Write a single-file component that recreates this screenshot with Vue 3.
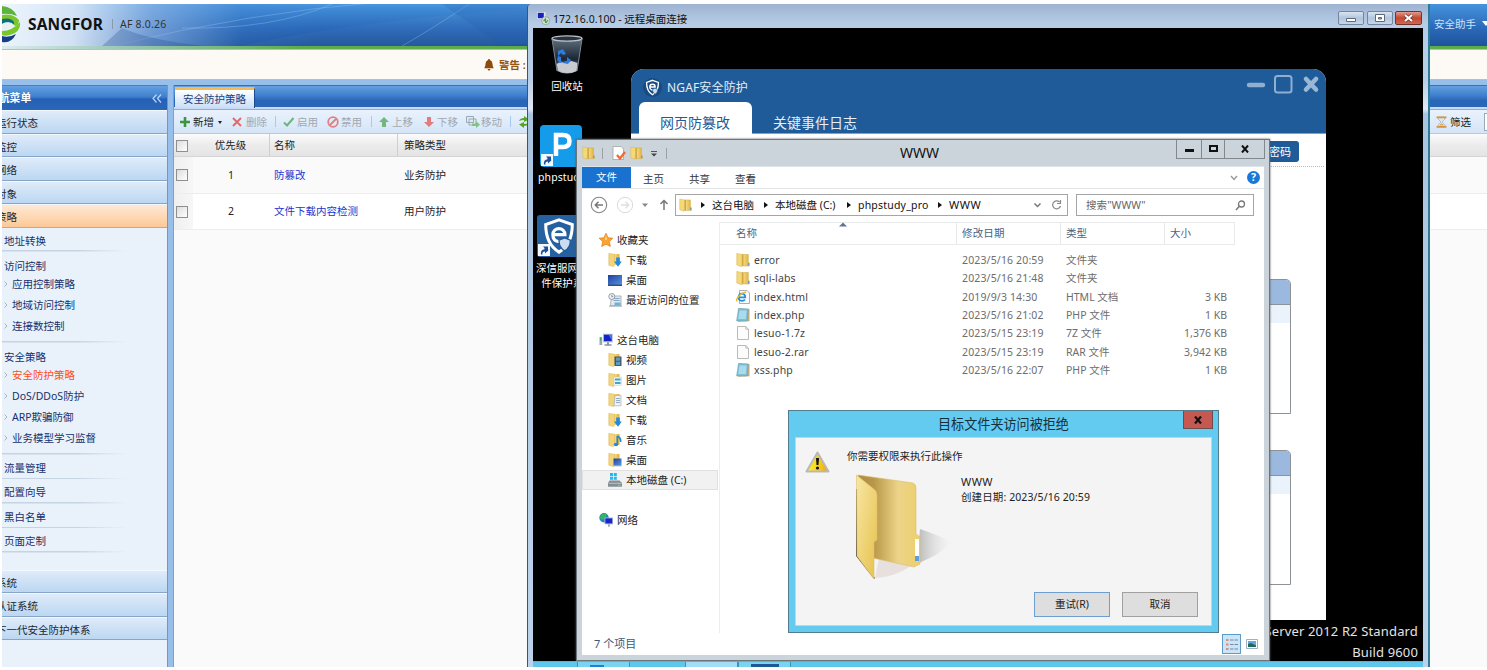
<script setup>
const topMenus = ['运行状态', '监控', '网络', '对象', '策略']
const bottomMenus = ['系统', '认证系统', '下一代安全防护体系']
const tree = [
  { cls: 't1', label: '地址转换', kids: [] },
  { cls: 't2', label: '访问控制', kids: ['应用控制策略', '地域访问控制', '连接数控制'] },
  { cls: 't3', label: '安全策略', kids: ['安全防护策略', 'DoS/DDoS防护', 'ARP欺骗防御', '业务模型学习监督'] },
  { cls: 't4', label: '流量管理', kids: [] },
  { cls: 't4', label: '配置向导', kids: [] },
  { cls: 't4', label: '黑白名单', kids: [] },
  { cls: 't4', label: '页面定制', kids: [] },
]
const rows = [
  { n: 1, name: '防篡改', type: '业务防护' },
  { n: 2, name: '文件下载内容检测', type: '用户防护' },
]
const favs = [['下载', 'f-down'], ['桌面', 'desk'], ['最近访问的位置', 'recent']]
const pcs = [
  ['视频', 'f-video'], ['图片', 'f-pic'], ['文档', 'f-doc'], ['下载', 'f-down'],
  ['音乐', 'f-music'], ['桌面', 'f-desk'], ['本地磁盘 (C:)', 'drive'],
]
const files = [
  ['error', '2023/5/16 20:59', '文件夹', '', 'folder'],
  ['sqli-labs', '2023/5/16 21:48', '文件夹', '', 'folder'],
  ['index.html', '2019/9/3 14:30', 'HTML 文档', '3 KB', 'ie'],
  ['index.php', '2023/5/16 21:02', 'PHP 文件', '1 KB', 'note'],
  ['lesuo-1.7z', '2023/5/15 23:19', '7Z 文件', '1,376 KB', 'blank'],
  ['lesuo-2.rar', '2023/5/15 23:19', 'RAR 文件', '3,942 KB', 'blank'],
  ['xss.php', '2023/5/16 22:07', 'PHP 文件', '1 KB', 'note'],
]
</script>

<template>
  <div class="page">
    <svg class="defs" width="0" height="0">
      <defs>
        <linearGradient id="gFold" x1="0" x2="1"><stop offset="0" stop-color="#f9e48c" /><stop offset="1" stop-color="#dcae3c" /></linearGradient>
        <linearGradient id="gBig" x1="0" x2="1" y1="0" y2="1"><stop offset="0" stop-color="#f8e6a4" /><stop offset="1" stop-color="#e6c14c" /></linearGradient>
        <linearGradient id="gBack" x1="0" x2="1"><stop offset="0" stop-color="#b08d40" /><stop offset=".25" stop-color="#b99748" /><stop offset=".65" stop-color="#ecd488" /><stop offset="1" stop-color="#edcf6c" /></linearGradient>
        <linearGradient id="gShade" x1="0" x2="1"><stop offset="0" stop-color="#999" stop-opacity=".9" /><stop offset="1" stop-color="#ddd" stop-opacity="0" /></linearGradient>
        <linearGradient id="gWarn" x1="0" x2="1"><stop offset="0" stop-color="#ffee35" /><stop offset=".5" stop-color="#f7d51c" /><stop offset="1" stop-color="#f0a010" /></linearGradient>
        <linearGradient id="gBin" x1="0" x2="0" y1="0" y2="1"><stop offset="0" stop-color="#6d7c8c" /><stop offset=".6" stop-color="#1d2a3a" /><stop offset="1" stop-color="#b4bac0" /></linearGradient>
        <linearGradient id="gDesk" x1="0" x2="1" y1="0" y2="1"><stop offset="0" stop-color="#1d3f9c" /><stop offset="1" stop-color="#5a94e0" /></linearGradient>
      </defs>
      <symbol id="folder" viewBox="0 0 14 14">
        <path d="M6 1.500h6.300v7.500l1 1v3H6z" fill="url(#gFold)" stroke="#d0a342" stroke-width=".5" />
        <path d="M.8.500 6 1.500v5.500l-.6 6.800L.8 12z" fill="#f4d976" stroke="#d9b04c" stroke-width=".5" />
        <path d="M6.200 1.800v11h1.200v-11z" fill="#c2922f" opacity=".8" />
        <path d="M12 10h1.200v2.500H12z" fill="#5d9ede" />
      </symbol>
      <symbol id="fbase" viewBox="0 0 14 14">
        <path d="M6 1h5.500V12H6z" fill="url(#gFold)" />
        <path d="M.8 .4 6.500 1.200v10.300L5.500 13.600.8 12.300z" fill="#f2d57a" stroke="#dbb354" stroke-width=".5" />
      </symbol>
      <symbol id="f-down" viewBox="0 0 14 14"><use href="#fbase" /><path d="M8.200 4.500h3.600v4h2L10 13.700 6 8.500h2.200z" fill="#2389dc" /></symbol>
      <symbol id="f-video" viewBox="0 0 14 14"><use href="#fbase" /><path d="M6.500 3.500h7V13h-7z" fill="#4a5560" /><path d="M8 4.500h4.200v3.300H8zM8 8.800h4.200v3.200H8z" fill="#5b9bc4" /></symbol>
      <symbol id="f-pic" viewBox="0 0 14 14"><use href="#fbase" /><path d="M6 4h7.600v8.500H6z" fill="#eaf4fa" stroke="#b4c4ce" stroke-width=".4" /><path d="M7 5.500h5.600v2H7zM7 9h5.600v2H7z" fill="#4aa2c9" /></symbol>
      <symbol id="f-doc" viewBox="0 0 14 14"><use href="#fbase" /><path d="M7 2.500h6v10.300H6z" fill="#eef1f5" stroke="#9aa5b1" stroke-width=".6" /><path d="M8 5.500h4M8 7.500h4M8 9.500h4" stroke="#7b9cc0" stroke-width=".8" /></symbol>
      <symbol id="f-music" viewBox="0 0 14 14"><use href="#fbase" /><path d="M9.300 3v8M9.300 3q4 2 3.200 6" stroke="#2788d6" stroke-width="1.700" fill="none" /><ellipse cx="8" cy="11.500" rx="2.200" ry="1.800" fill="#2788d6" /></symbol>
      <symbol id="f-desk" viewBox="0 0 14 14"><use href="#fbase" /><path d="M5.500 5.500h8V12h-8z" fill="url(#gDesk)" /><path d="M5.500 12h8v1.300h-8z" fill="#8ea3b8" /></symbol>
      <symbol id="desk" viewBox="0 0 14 14"><path d="M0 2h14v10H0z" fill="url(#gDesk)" /><path d="M0 11.500h14v1.500H0z" fill="#30507e" /></symbol>
      <symbol id="recent" viewBox="0 0 14 14"><path d="M3.500 3h9.500v9.500H2.500z" fill="#e4e9ec" stroke="#8f9aa2" stroke-width=".7" /><path d="M5.500 5.500h6M5.500 7.500h6" stroke="#7ba6c6" /><circle cx="3.800" cy="3.500" r="3" fill="#eef2f4" stroke="#8a949b" stroke-width=".9" /><path d="M3.800 2v1.700h1.400" fill="none" stroke="#666" stroke-width=".7" /><path d="M6.500 9.500h6v3h-6z" fill="#6fb0d4" /><path d="M1 12.500h13v1.200H1z" fill="#a7afb5" /></symbol>
      <symbol id="drive" viewBox="0 0 14 14"><path d="M2 0h3v3H2zM5.800 0h3v3h-3zM2 3.800h3v3H2zM5.800 3.800h3v3h-3z" fill="#20b9f0" /><path d="M1.500 7.500h10L14 10v3.700H0V10z" fill="#858e96" /><path d="M.5 9.800h13v.9H.5z" fill="#c3c9cd" /><path d="M10 11.700h2.500v1H10z" fill="#6ee080" /></symbol>
      <symbol id="star" viewBox="0 0 14 14"><path d="m7 .2 2.100 4.500 4.800.500-3.500 3.300.900 5L7 11.200l-4.300 2.300.900-5L.1 5.200 4.900 4.700z" fill="#fba233" stroke="#e0801c" stroke-width=".7" /><path d="m7 2.500 1 4.300H6z" fill="#ffe29a" /></symbol>
      <symbol id="pc" viewBox="0 0 14 14"><path d="M4 .800h9.700v8.500H4z" fill="#a9b8d4" /><path d="M5 1.800h7.700v6.300H5z" fill="#1422c8" /><path d="M9.500 1.800h3.200v5.500z" fill="#4a7ae8" /><path d="M.5 4h2.700v8H.5z" fill="#9ca5ad" /><path d="M1 5h1.200v2.500H1z" fill="#35b44a" /><path d="M8 9.200h2v2h2.500v1.600H5.500v-1.600H8z" fill="#8893a0" /></symbol>
      <symbol id="net" viewBox="0 0 14 14"><circle cx="5" cy="4.800" r="4.700" fill="#2182c8" /><path d="M2 2Q5-.5 8 1.500L6 5 3 7 .8 5z" fill="#35b55e" /><path d="M5.500 4.500H14v6.800H5.500z" fill="#a9b8d4" /><path d="M6.400 5.400h6.800v5H6.400z" fill="#1624c8" /><path d="M9.300 11.300h1.300v2.500H9.300z" fill="#7c8790" /></symbol>
      <symbol id="ie" viewBox="0 0 14 14"><path d="M3.500.5H11l2.500 2.500v10.500h-10z" fill="#fafafa" stroke="#999" stroke-width=".8" /><path d="M2.800 7.300h6.400q0-3.600-3.300-3.600T2.600 7.300 6 10.800q2 0 2.900-1.400" fill="none" stroke="#2390da" stroke-width="1.800" /><path d="M1 11.500C-.5 9 4 3 10.200 2" fill="none" stroke="#edb82d" stroke-width="1.400" /></symbol>
      <symbol id="note" viewBox="0 0 14 14"><path d="m2.500.5 11 .5v12.300L2 13.800z" fill="#c2ac80" /><path d="m2.500.5 9.700.4-1 12H.6z" fill="#7fbfd6" stroke="#5f9ab0" stroke-width=".5" /><path d="m3.500 2.500 7.200.1-.8 8.400H2.300z" fill="#a8dbec" /></symbol>
      <symbol id="blank" viewBox="0 0 14 14"><path d="M1.500.5h8.300l2.700 2.700v10.300h-11z" fill="#fcfcfc" stroke="#a8a8a8" stroke-width=".8" /><path d="M9.800.5v2.700h2.700" fill="none" stroke="#a8a8a8" stroke-width=".7" /></symbol>
      <symbol id="shield" viewBox="0 0 20 20"><path d="M10 1.500 17 4c0 7-2 11.500-7 14.500C5 15.500 3 11 3 4z" fill="none" stroke="#fff" stroke-width="1.600" /><path d="M6.800 9.300h6.300c0-4.300-6.300-4.300-6.300 0 0 4 4 4.500 6 2.500" fill="none" stroke="#fff" stroke-width="1.700" /><path d="m13 11 3 1.200c0 3-1 4.500-3 5.600-2-1.100-3-2.600-3-5.600z" fill="#c9dcf0" stroke="#1f5b99" stroke-width=".7" /></symbol>
      <symbol id="link" viewBox="0 0 12 12"><path d="M0 0h12v12H0z" fill="#f4f7fb" /><path d="M3 10.500C2.500 7 4 5.500 6.500 5.200V3L10.500 6 7 9.500V7.500C5 7.500 4 8.500 4.500 10.500z" fill="#1e4f9a" /><path d="M5 2.500h5v5z" fill="#1e4f9a" /></symbol>
    </svg>

    <div class="stage">
      <header class="top">
        <svg class="waves" width="1485" height="42" viewBox="0 0 1485 42">
          <path d="M90 0H525V42H240Q330 20 525 4" fill="#fff" opacity=".03" />
          <path d="M110 42Q250 8 380-2M180 24Q270 26 330 0M400 42Q430 25 470-2" fill="none" stroke="#9cc8f2" stroke-width=".8" opacity=".45" />
          <path d="M120 24Q200 60 525 40V42H100z" fill="#123f86" opacity=".25" />
          <path d="M440 0H525V42H500z" fill="#1c5aab" opacity=".2" />
        </svg>
        <svg class="logo" width="22" height="42" viewBox="0 0 22 42">
          <path d="M0 1Q11 2 15 11 8 8 0 9z" fill="#5ab53a" />
          <path d="M0 10Q10 8 17 15 17 20 13 21 8 14 0 17z" fill="#7cc62c" />
          <path d="M0 14Q9 12 12 17L12 20Q5 15 0 19z" fill="#0d6f80" />
          <path d="M0 26Q10 26 18 17 19 24 13 28 5 32 0 30z" fill="#79c72b" />
          <path d="M0 19Q9 15 12 20 9 24 0 25z" fill="#e6f1f4" />
          <path d="M0 31Q7 33 14 29 9 39 0 37z" fill="#173d86" />
        </svg>
        <b class="brand">SANGFOR</b><i class="bar"></i><span class="ver">AF 8.0.26</span>
        <span class="assist">安全助手</span><i class="tri"></i>
      </header>
      <div class="alert">
        <svg width="10" height="12" viewBox="0 0 10 12"><path d="M5 0q1 0 1 1 2.500.800 2.500 4 0 2.800 1.200 4.200H.3Q1.500 7.800 1.500 5 1.500 1.800 4 1q0-1 1-1zM3.600 10h2.800Q6.200 11.600 5 11.600T3.600 10z" fill="#8d4a08" /></svg>
        <b>警告 :</b>
      </div>

      <div class="main">
        <nav class="side">
          <div class="side-title"><b>导航菜单</b><svg width="10" height="9" viewBox="0 0 10 9"><path d="M4.500.5 1 4.500l3.500 4M9 .5 5.500 4.500 9 8.500" fill="none" stroke="#b7d6fa" stroke-width="1.200" /></svg></div>
          <div v-for="(m, i) in topMenus" :key="m" class="acc" :class="{ hot: i === 4 }">{{ m }}</div>
          <div class="tree">
            <div v-for="g in tree" :key="g.label" class="grp" :class="g.cls">
              <div class="gname">{{ g.label }}</div>
              <div v-for="k in g.kids" :key="k" class="kid" :class="{ red: k === '安全防护策略' }">
                <svg width="4" height="6" viewBox="0 0 4 6"><path d="m.5.500 2.500 2.500-2.500 2.500" fill="none" stroke="#a3b4c6" /></svg>{{ k }}
              </div>
            </div>
          </div>
          <div v-for="m in bottomMenus" :key="m" class="acc">{{ m }}</div>
        </nav>
        <section class="content">
          <div class="tabs"><div class="tab">安全防护策略</div></div>
          <div class="tools">
            <svg class="ic i1" width="10" height="10"><path d="M5 0v10M0 5h10" stroke="#3f9440" stroke-width="2.600" /></svg><span class="on">新增</span><i class="dd"></i>
            <svg class="ic i2" width="10" height="10"><path d="m1 1 8 8M9 1 1 9" stroke="#e2696b" stroke-width="1.900" /></svg><span>删除</span><i class="sep s1"></i>
            <svg class="ic i3" width="12" height="10"><path d="m1 5.500 3 3L10.500 1" fill="none" stroke="#71b380" stroke-width="2" /></svg><span>启用</span>
            <svg class="ic i4" width="12" height="12"><circle cx="6" cy="6" r="4.800" fill="none" stroke="#e08080" stroke-width="1.800" /><path d="m9.500 2.500-7 7" stroke="#e08080" stroke-width="1.800" /></svg><span>禁用</span><i class="sep s2"></i>
            <svg class="ic i5" width="10" height="10"><path d="m5 0 5 5H7v5H3V5H0z" fill="#73b77c" /></svg><span>上移</span>
            <svg class="ic i6" width="10" height="10"><path d="m5 10 5-5H7V0H3v5H0z" fill="#e27b7b" /></svg><span>下移</span>
            <svg class="ic i7" width="14" height="12"><path d="M.5.500h7v6h-7zM3 3h7v6H3z" fill="#e3ebf2" stroke="#98a9b8" /><path d="M6 7.500h4V5l4 3.800-4 3.200v-2H6z" fill="#82c282" /></svg><span>移动</span><i class="sep s3"></i>
            <svg class="ic i8" width="12" height="12"><path d="M1 5q1-3 5-3V0l5 3.500L6 6V4Q3 4 1 5zM11 7q-1 3-5 3v2L1 8.500 6 6v2q3 0 5-1z" fill="#56a525" /></svg>
            <svg class="ic i9" width="11" height="12" viewBox="0 0 11 12"><path d="M2 1h7v2L6 6l3 3v2H2V9l3-3-3-3z" fill="#dbe6ee" stroke="#9eb0bd" stroke-width=".7" /><path d="M.5.500h10v1.800H.5zM.5 10h10v1.800H.5z" fill="#dc9340" /><path d="M3 9.500 5.500 7.200l2.500 2.300z" fill="#e2a24d" /></svg><span class="flt">筛选</span><i class="inp"></i>
          </div>
          <div class="gh"><i class="cb"></i><span class="c1">优先级</span><span class="c2">名称</span><span class="c3">策略类型</span></div>
          <div v-for="r in rows" :key="r.n" class="gr"><div class="cbw"><i class="cb"></i></div><span class="c1">{{ r.n }}</span><span class="c2 lk">{{ r.name }}</span><span class="c3">{{ r.type }}</span></div>
        </section>
      </div>

      <div class="rdp">
        <div class="rdp-title">
          <svg width="13" height="13" viewBox="0 0 13 13"><path d="M0 0h8.500v7H0z" fill="#dfe6f0" /><path d="M.8.800h6v5.400h-6z" fill="#1822b8" /><circle cx="8.700" cy="8.700" r="4" fill="#d9e2da" stroke="#7d8c85" stroke-width=".6" /><path d="m6.500 9 2-2v4M11 8l-2 3" stroke="#43a047" stroke-width="1.200" fill="none" /></svg>
          <span>172.16.0.100 - 远程桌面连接</span>
          <i class="wb"><svg width="26" height="14"><path d="M8.500 7.500h9v3h-9z" fill="#fff" stroke="#5c6a7c" /></svg></i>
          <i class="wb"><svg width="26" height="14"><path d="M8.500 3.500h9v7h-9z" fill="#fff" stroke="#5c6a7c" /><path d="M11.500 6.500h3v1.500h-3z" fill="#9fb0c4" stroke="#5c6a7c" /></svg></i>
          <i class="wb cl"><svg width="27" height="14"><path d="m10 4 7 6M17 4l-7 6" stroke="#6c3a38" stroke-width="3.600" /><path d="m10 4 7 6M17 4l-7 6" stroke="#fff" stroke-width="2" /></svg></i>
        </div>
        <div class="desktop">
          <div class="dicon d1">
            <svg width="34" height="40" viewBox="0 0 34 40"><path d="M2 3h30l-5 33q-10 5-20 0z" fill="url(#gBin)" opacity=".9" /><ellipse cx="17" cy="3.500" rx="15" ry="2.600" fill="#28323e" stroke="#b8c0c8" stroke-width="1.400" /><path d="m6.500 29 4-2 5 1 6-2 6 2-1 8q-9 4-18 0z" fill="#c8ccd0" /><path d="m2 4 5 32M32 4l-5 32" stroke="#7f8a95" /><path d="m8 16 5-2 3 5-3 1-2-2-3 3zM17 22l4 3-3 4-5-1 2-2 2 0zM8 21l3 1 0 4 2 1-3 1-3-3z" fill="#2e7be0" /></svg>
            <span>回收站</span>
          </div>
          <div class="dicon d2">
            <svg width="42" height="42" viewBox="0 0 42 42"><rect width="42" height="42" rx="4" fill="#149bea" /><path d="M16 31V10h7q6.500 0 6.500 6t-6.500 6h-6" fill="none" stroke="#fff" stroke-width="4.500" /><use href="#link" x="1" y="29" width="12" height="12" /></svg>
            <span>phpstudy</span>
          </div>
          <div class="dicon d3">
            <svg width="42" height="42" viewBox="0 0 42 42"><rect width="42" height="42" rx="3" fill="#2560a0" /><use href="#shield" x="2" y="2" width="40" height="38" /><use href="#link" x="1" y="29" width="12" height="12" /></svg>
            <span>深信服网页文<br>件保护系统</span>
          </div>
          <div class="mark">Server 2012 R2 Standard<br><span>Build 9600</span></div>

          <div class="ngaf">
            <div class="nh">
              <div class="nt"><i class="badge"><svg width="17" height="17"><use href="#shield" /></svg></i><span>NGAF安全防护</span>
                <svg class="nbtn" width="74" height="20" viewBox="0 0 74 20"><path d="M3 11h14" stroke="#8fafd0" stroke-width="4.400" stroke-linecap="round" /><rect x="29" y="2" width="16.500" height="16.500" rx="2.500" fill="none" stroke="#8fafd0" stroke-width="2" /><path d="m60 5 10 10.500M70 5 60 15.500" stroke="#9ab7d5" stroke-width="4.600" stroke-linecap="round" /></svg>
              </div>
              <div class="ntabs"><div class="ntab act">网页防篡改</div><div class="ntab">关键事件日志</div></div>
            </div>
            <div class="nb">
              <div class="pwr"><span class="pw">修改密码</span></div>
              <div class="panel p1"><div class="ph"></div><div class="pr"></div></div>
              <div class="panel p2"><div class="ph"></div><div class="pr"></div></div>
            </div>
          </div>

          <div class="exp">
            <div class="et">
              <div class="qa"><svg class="q1" width="13" height="14"><use href="#folder" /></svg><i></i><svg class="q2" width="14" height="14" viewBox="0 0 14 14"><path d="M1 .500h8l2.500 2.500v10.500H1z" fill="#fff" stroke="#999" stroke-width=".7" /><path d="m5 9 3 3.500L13 6" fill="none" stroke="#ec6a34" stroke-width="2.300" /></svg><svg class="q3" width="13" height="14"><use href="#folder" /></svg><svg class="q4" width="6" height="6"><path d="M0 .500h6" stroke="#555" /><path d="M0 2.500h6L3 5.500z" fill="#444" /></svg><i></i></div>
              <span class="etitle">WWW</span>
              <div class="eb"><i class="b1"><svg width="9" height="4"><path d="M0 1.500h9" stroke="#111" stroke-width="3" /></svg></i><i class="b2"><svg width="9" height="8"><rect x="1" y="1" width="7" height="5" fill="none" stroke="#111" stroke-width="2" /></svg></i><i class="b3"><svg width="8" height="8"><path d="m1 .500 6 7M7 .500l-6 7" stroke="#111" stroke-width="2" /></svg></i></div>
            </div>
            <div class="ebody">
              <div class="menu"><span class="m0">文件</span><span>主页</span><span>共享</span><span>查看</span>
                <svg class="chev" width="8" height="6"><path d="m1 1 3 3.500L7 1" fill="none" stroke="#999" stroke-width="1.400" /></svg>
                <i class="help">?</i></div>
              <div class="addr">
                <svg width="92" height="22" viewBox="0 0 92 22"><circle cx="17" cy="11" r="7.700" fill="none" stroke="#858585" stroke-width="1.100" /><path d="M21 11h-7.500M16.500 7.800 13.300 11l3.200 3.200" fill="none" stroke="#777" stroke-width="1.500" /><circle cx="43" cy="11" r="7.700" fill="none" stroke="#d9d9d9" /><path d="M39 11h7.500M43.500 7.800 46.700 11l-3.200 3.200" fill="none" stroke="#dedede" stroke-width="1.300" /><path d="M60 9.500h6l-3 3.500z" fill="#888" /><path d="M82 16V7M78.500 10 82 6.500l3.500 3.500" fill="none" stroke="#777" stroke-width="1.500" /></svg>
                <div class="abox"><svg width="13" height="14"><use href="#folder" /></svg><i class="ar"></i><span class="a1">这台电脑</span><i class="ar"></i><span class="a2">本地磁盘 (C:)</span><i class="ar"></i><span class="a3">phpstudy_pro</span><i class="ar"></i><span class="a4">WWW</span>
                  <svg class="acts" width="30" height="12"><path d="m1.500 4.500 3 3 3-3" fill="none" stroke="#777" stroke-width="1.500" /><path d="M26.500 3A4 4 0 1 0 27.500 7M27.500 1v3.500H24" fill="none" stroke="#888" stroke-width="1.200" /></svg></div>
                <div class="sbox"><span>搜索"WWW"</span><svg width="11" height="11"><circle cx="6.500" cy="4" r="3" fill="none" stroke="#777" stroke-width="1.300" /><path d="M4.500 6 1 10" stroke="#777" stroke-width="1.500" /></svg></div>
              </div>
              <div class="panes">
                <div class="np">
                  <div class="n0"><svg width="14" height="14"><use href="#star" /></svg>收藏夹</div>
                  <div v-for="f in favs" :key="f[0]" class="n1"><svg width="14" height="14"><use :href="'#' + f[1]" /></svg>{{ f[0] }}</div>
                  <div class="gap"></div>
                  <div class="n0"><svg width="14" height="14"><use href="#pc" /></svg>这台电脑</div>
                  <div v-for="f in pcs" :key="f[0]" class="n1" :class="{ sel: f[1] === 'drive' }"><svg width="14" height="14"><use :href="'#' + f[1]" /></svg>{{ f[0] }}</div>
                  <div class="gap"></div>
                  <div class="n0"><svg width="14" height="14"><use href="#net" /></svg>网络</div>
                </div>
                <div class="fl">
                  <div class="fh"><span class="k1">名称<svg width="8" height="5"><path d="M0 4.500h8L4 .500z" fill="#5d7594" /></svg></span><span class="k2">修改日期</span><span class="k3">类型</span><span class="k4">大小</span></div>
                  <div v-for="f in files" :key="f[0]" class="fr"><span class="k1"><svg width="14" height="14"><use :href="'#' + f[4]" /></svg>{{ f[0] }}</span><span class="k2">{{ f[1] }}</span><span class="k3">{{ f[2] }}</span><span class="k4">{{ f[3] }}</span></div>
                </div>
              </div>
              <div class="stat"><span>7 个项目</span>
                <div class="vw"><i class="v1"><svg width="14" height="14"><path d="M1 2h2.500M1 6.500h2.500M1 11h2.500" stroke="#d98c84" stroke-width="2" /><path d="M5 2h3.500M9.500 2H13M5 6.500h3.500M9.500 6.500H13M5 11h3.500M9.500 11H13" stroke="#7a8a99" stroke-width="1.200" /></svg></i><svg width="12" height="10"><path d="M.5.500h11v9H.5z" fill="#fff" stroke="#9db2c4" /><path d="M2 2h8v6H2z" fill="#5ea9e0" /><path d="m2 5 3-1 5 2.500V8H2z" fill="#24685b" /></svg></div>
              </div>
            </div>
          </div>

          <div class="dlg">
            <div class="dt"><span>目标文件夹访问被拒绝</span><i><svg width="8" height="8"><path d="m1 .500 6 7M7 .500l-6 7" stroke="#111" stroke-width="2.200" /></svg></i></div>
            <div class="db">
              <div class="dmsg"><svg width="25" height="22" viewBox="0 0 25 22"><path d="M12.500 1.500 23.500 20.500h-22z" fill="url(#gWarn)" stroke="#b9b9b4" stroke-width="2" stroke-linejoin="round" /><path d="M11 7h3l-.500 7h-2z" fill="#111" /><circle cx="12.500" cy="17" r="1.600" fill="#111" /></svg><span>你需要权限来执行此操作</span></div>
              <div class="dinfo">
                <svg width="106" height="106" viewBox="0 0 106 106">
                  <path d="M62 90 65 55Q80 60 97 68 88 76 81 81z" fill="url(#gShade)" opacity=".75" />
                  <path d="M20 104 24 84 56 92Q40 103 20 104z" fill="#dcd0cc" opacity=".55" />
                  <path d="M1 15h2v67l17 22-1 1L1 82z" fill="#4c4a45" />
                  <path d="M3 1 58 9Q61 10 61 14V60l4 3V90l-6 3L18 84z" fill="url(#gBack)" stroke="#d8bd68" stroke-width=".6" />
                  <path d="M1.500 1 20 16Q22 18 22 21V66l-3 2v37L2 82z" fill="url(#gBig)" stroke="#dfc06a" stroke-width=".6" />
                  <path d="M60 65h4v22h-4z" fill="#fff" /><path d="M60 82h4v5h-4z" fill="#5d9ede" />
                </svg>
                <div class="dtx"><b class="dn">WWW</b><br><span>创建日期: 2023/5/16 20:59</span></div>
              </div>
              <div class="dbtn"><span class="pri">重试(R)</span><span>取消</span></div>
            </div>
          </div>
          <div class="task"><i class="k0"></i><i class="ta"><b></b></i><i class="tb"></i><i class="tc"></i><i class="ta td"><b></b></i></div>
        </div>
      </div>
    </div>
  </div>
</template>

<style>
html, body { margin: 0; background: #fff; overflow: hidden; }
</style>

<style scoped>
* { box-sizing: border-box; }
i { font-style: normal; }
svg { display: block; flex: none; }
.page { width: 1487px; height: 670px; padding: 4px 0 0 2px; overflow: hidden; background: #fff; font: 10.5px/14px "Noto Sans", "Noto Sans CJK SC", sans-serif; color: #222; white-space: nowrap; }
.defs { position: absolute; }
.stage { position: relative; width: 1485px; height: 663px; overflow: hidden; background: #97bfe9; }

.top { position: relative; height: 46px; display: flex; align-items: center; padding-bottom: 6px; border-bottom: 1px solid #aebfd3; background: linear-gradient(90deg, rgba(225,238,250,.95) 0, rgba(180,212,225,.7) 120px, transparent 300px) 0 42px / 100% 3px no-repeat, linear-gradient(#5dab4c, #5dab4c) 0 42px / 100% 3px no-repeat, linear-gradient(90deg, rgba(240,247,254,.98) 0, rgba(220,233,248,.95) 70px, rgba(150,185,230,.65) 150px, rgba(70,130,205,.2) 240px, transparent 320px), linear-gradient(#4593dd, #2a68b8 55%, #1e539b 42px); }
.waves { position: absolute; left: 0; top: 0; }
.logo { position: relative; margin-top: 5px; }
.brand { position: relative; margin-left: 4px; width: 78px; font-size: 15.5px; color: #111; letter-spacing: .15px; }
.bar { width: 1px; height: 10px; background: #8a98a8; margin-left: 6px; }
.ver { margin-left: 7px; color: #333; letter-spacing: .2px; position: relative; }
.assist { margin-left: auto; color: #cfe3fa; position: relative; padding-top: 1px; }
.tri { border: 4px solid transparent; border-top: 5px solid #fff; margin: 4px -3px 0 6px; }
.alert { height: 30px; background: #fdf9f4; border-bottom: 1px solid #b9bfc8; display: flex; align-items: center; padding-left: 482px; }
.alert b { margin-left: 5px; color: #94540f; font-weight: 600; }

.main { display: flex; height: 587px; padding-top: 5px; }
.side { width: 166px; background: #e9f2fb; border-right: 1px solid #6f97c7; flex: none; overflow: hidden; }
.side-title { height: 25px; display: flex; align-items: center; justify-content: space-between; background: linear-gradient(#63a0e2, #3f7fcd 45%, #2660b5 55%, #2a67b8); border-top: 1px solid #4b7fbe; color: #fff; padding-right: 5px; }
.side-title b { margin-left: -14px; font-size: 10.8px; }
.acc { height: 23.5px; line-height: 24px; text-indent: -6px; background: linear-gradient(#dfebf9, #bcd7f2); border-bottom: 1.5px solid #86a5c9; border-top: 1px solid #f2f8fe; color: #1b2733; }
.acc.hot { background: linear-gradient(#fde9d6, #fdc997); border-bottom-color: #9fb0c4; }
.tree { height: 342px; color: #17306c; }
.grp { background: linear-gradient(90deg, #c6d3e2 60%, transparent) 0 100% / 125px 1.5px no-repeat; }
.gname { padding-left: 2px; }
.kid { display: flex; align-items: center; height: 21px; padding-left: 2px; }
.kid svg { margin-right: 4px; }
.kid.red { color: #ff4a1c; }
.t1 { height: 24px; padding-top: 6px; }
.t2 { height: 91px; padding-top: 7px; }
.t3 { height: 112px; padding-top: 7px; }
.t2 .gname, .t3 .gname { height: 14.5px; }
.t4 { height: 24.5px; padding-top: 6px; }

.content { flex: 1; margin-left: 5px; background: #fafafa; border-left: 1px solid #7f9fc8; min-width: 0; }
.tabs { height: 25px; background: linear-gradient(#63a0e2, #3f7fcd 40%, #2a66b8 60%, #2a66b8 21px, #c6dcf6 21px, #c6dcf6 23px, #8eaed6 23px, #8eaed6 24px, #e6f0fb 24px); border-top: 1px solid #3f6fae; padding: 1px 0 0 1px; }
.tab { width: 80px; height: 21px; background: linear-gradient(#fff, #c9def7); border-top: 3px solid #f2bc55; border-right: 1px solid #1d4b8f; padding-left: 8px; line-height: 18px; color: #1c3d7c; }
.tools { height: 24px; background: linear-gradient(#e9f2fc, #d5e5f7); border-bottom: 1px solid #b5c9e0; display: flex; align-items: center; color: #a2a8b0; }
.tools span { width: 21px; }
.tools .on { color: #222; }
.ic { margin-right: 3px; }
.i1 { margin-left: 6px; }
.dd { border: 2.500px solid transparent; border-top: 3px solid #222; margin: 3px 0 0 4px; }
.i2 { margin-left: 10px; margin-right: 4px; }
.sep { width: 1px; height: 11px; background: #a9c8ee; }
.s1 { margin-left: 8px; }
.i3 { margin-left: 7px; margin-right: 2px; }
.i4 { margin-left: 9px; margin-right: 2px; }
.s2 { margin-left: 9px; }
.i5 { margin-left: 7px; }
.i6 { margin-left: 11px; }
.i7 { margin-left: 8px; margin-right: 1px; }
.s3 { margin-left: 8px; }
.i8 { margin-left: 7px; }
.i9 { margin-left: auto; }
.tools .flt { color: #222; width: 22px; }
.inp { width: 3px; height: 18px; border: 1px solid #99a9bb; background: #fff; margin-left: 12px; border-right: 0; }
.gh, .gr { display: flex; align-items: center; }
.gh { height: 23px; background: linear-gradient(#fbfbfb, #ececec 50%, #e4e4e4); border-bottom: 1px solid #d5d5d5; }
.gr { height: 36.500px; border-bottom: 1px solid #ededed; background: #fafafa; }
.gr + .gr { background: #fff; }
.cb { display: block; width: 12px; height: 12px; border: 1px solid #8d8f91; background: linear-gradient(135deg, #dcdcdc, #fff); margin-left: 2px; flex: none; }
.gh .cb { margin-right: 4px; margin-top: 2px; }
.cbw { width: 19px; height: 100%; background: linear-gradient(90deg, #efefef, #f7f7f7); padding-top: 12px; }
.c1 { width: 77px; text-align: center; flex: none; }
.gr .c1 { text-indent: -1px; }
.c2 { width: 128px; padding-left: 4px; flex: none; }
.c3 { padding-left: 6px; }
.gh .c2, .gh .c3 { line-height: 22px; border-left: 1px solid #cfcfcf; padding-left: 4px; }
.gh .c3 { padding-left: 6px; }
.lk { color: #1a35d0; }

.rdp { position: absolute; left: 525px; top: 0; width: 903px; height: 663px; background: linear-gradient(#9db3d0, #b7cce6 20px, #b9cee7 75px, #dfeaf6 105px, #aac4e0 110px, #bcd2ea 600px); border-left: 1.500px solid #43546a; border-right: 2px solid #2d7d97; border-radius: 4px 0 0 0; padding-left: 5px; }
.rdp-title { height: 24px; display: flex; align-items: center; padding: 5px 6px 0 4px; color: #111; }
.rdp-title span { margin: 0 auto 0 3px; }
.wb { display: block; width: 26px; height: 14px; border: 1px solid #7386a0; border-radius: 2px; margin: 0 0 1px 3px; background: linear-gradient(#d9e4f1, #b3c5db 50%, #c6d6ea); overflow: hidden; }
.wb svg { margin: -1px; }
.wb.cl { width: 27px; background: linear-gradient(#e49a8c, #c2472f 50%, #d2674f); border-color: #74332b; margin-left: 2px; }
.desktop { position: relative; width: 890px; height: 639px; background: #000; overflow: hidden; }
.dicon { position: absolute; display: flex; flex-direction: column; align-items: center; color: #fff; text-align: center; }
.d1 { left: 17px; top: 7px; }
.d1 span { margin-top: 4px; }
.d2 { left: 5px; top: 97px; letter-spacing: .1px; }
.d2 svg { margin-right: 1px; }
.d2 span { margin-top: 3px; }
.d3 { left: 3px; top: 187px; }
.d3 svg { margin-right: 19px; }
.d3 span { margin-top: 4px; line-height: 15px; }
.mark { position: absolute; right: 5px; top: 593px; text-align: right; font-size: 13px; line-height: 20.500px; color: #e4e4e4; letter-spacing: .15px; }

.ngaf { position: absolute; left: 98px; top: 41px; width: 695px; height: 551px; background: #fff; border-radius: 13px 13px 0 0; overflow: hidden; }
.nh { height: 65px; background: #1f5b99; border-bottom: 1px solid #7ea2c8; color: #e6eef7; }
.nt { height: 33px; display: flex; align-items: center; padding: 4px 3px 0 12px; font-size: 12px; }
.nt span { margin-left: 5px; letter-spacing: .15px; }
.badge { width: 19px; height: 19px; border-radius: 50%; background: #194a80; padding: 1px; }
.nbtn { margin: -8px 3px 0 auto; }
.ntabs { display: flex; padding-left: 8px; }
.ntab { width: 133px; height: 32px; line-height: 41px; padding-left: 21px; font-size: 14px; }
.act { width: 113px; background: #fff; border-radius: 6px 6px 0 0; color: #1f5b99; }
.pwr { height: 33px; padding-top: 7px; border-bottom: 1px dotted #bbb; margin-right: 2px; display: flex; justify-content: flex-end; }
.pw { margin-right: 25px; width: 60px; height: 21px; border-radius: 3px; background: #1f5b99; color: #fff; font-size: 11px; line-height: 21px; text-align: right; padding-right: 8px; }
.panel { width: 640px; margin-left: 20px; border: 1px solid #8d9297; border-radius: 5px 5px 0 0; overflow: hidden; }
.ph { height: 25px; background: #9bb9df; border-bottom: 1.500px solid #8d9297; }
.pr { height: 18px; background: #eaf2fb; }
.p1 { margin-top: 112px; height: 135px; }
.p2 { margin-top: 36px; height: 135px; }

.exp { position: absolute; left: 43px; top: 111px; width: 694px; height: 522px; border: 1px solid #6d747a; background: #ccd4db; padding: 0 5px 6px; box-shadow: 0 0 2px #555; }
.et { display: flex; height: 26px; position: relative; }
.qa { display: flex; align-items: center; }
.qa i { width: 1px; height: 11px; background: #9aa2a8; }
.q1 { margin-right: 7px; }
.q2 { margin: 0 4px 0 9px; }
.q4 { margin: 2px 9px 0 8px; }
.etitle { position: absolute; left: 0; right: 7px; text-align: center; top: 5px; font-size: 14px; line-height: 16px; color: #111; }
.eb { display: flex; margin: 0 -1px 0 auto; height: 19px; border: 1px solid #82888d; border-top: 0; }
.eb i { display: flex; align-items: center; justify-content: center; border-right: 1px solid #82888d; }
.eb .b1 { width: 25px; padding-top: 3px; }
.eb .b2 { width: 23px; }
.eb .b3 { width: 39px; border: 0; }
.ebody { height: 489px; background: #fff; border-top: 1px solid #dfe4e8; display: flex; flex-direction: column; }
.menu { height: 22px; display: flex; align-items: center; border-bottom: 1px solid #e2e4e6; color: #333; }
.menu span { margin-right: 25px; width: 21px; padding-top: 2px; }
.menu .m0 { width: 49px; height: 21px; background: #1a72d0; color: #fff; text-align: center; margin-right: 12px; line-height: 20px; padding: 0; }
.chev { margin: 1px 9px 0 auto; }
.help { width: 13px; height: 13px; border-radius: 50%; background: #1a78d6; color: #fff; font-weight: 700; line-height: 13px; text-align: center; margin-right: 4px; }
.addr { height: 33px; padding: 5px 10px 6px 0; display: flex; }
.abox { width: 393px; height: 22px; margin-left: 1px; border: 1px solid #a5a5a5; display: flex; align-items: center; padding-left: 3px; color: #111; }
.ar { border: 3px solid transparent; border-left: 4px solid #111; border-right: 0; margin: 0 7px 0 9px; }
.abox .a1 { width: 43px; }
.abox .a2 { width: 63px; }
.abox .a3 { width: 71px; letter-spacing: .2px; }
.a4 { font-size: 11px; letter-spacing: .5px; }
.acts { margin: 0 4px 0 auto; }
.sbox { width: 178px; height: 22px; margin-left: 8px; border: 1px solid #a5a5a5; display: flex; align-items: center; justify-content: space-between; padding: 0 7px 0 9px; color: #666; letter-spacing: .1px; }
.panes { flex: 1; display: flex; }
.np { width: 138px; border-right: 1px solid #ededed; padding-top: 8px; }
.n0, .n1 { height: 20px; display: flex; align-items: center; gap: 4px; color: #222; padding-left: 17px; }
.n1 { padding-left: 26px; }
.sel { background: #f1f1f1; border: 1px solid #e0e0e0; padding-left: 25px; margin-right: 1px; }
.gap { height: 20px; }
.fl { flex: 1; color: #6d6d6d; }
.fh { display: flex; width: 515px; height: 23px; border: 1px solid #e8eaec; border-left: 0; color: #4b6380; margin-bottom: 6px; }
.fh span { border-right: 1px solid #e5e8eb; line-height: 21px; }
.fh .k4 { border: 0; text-align: left; padding-left: 5px; }
.k1 { position: relative; width: 237px; padding-left: 16px; }
.fh .k1 svg { position: absolute; left: 119px; top: -1px; }
.k2 { width: 104px; padding-left: 5px; letter-spacing: .15px; }
.k3 { width: 104px; padding-left: 5px; }
.k4 { width: 62px; text-align: right; }
.fr { display: flex; align-items: center; height: 18.300px; }
.fr .k1 { display: flex; align-items: center; gap: 4px; color: #444; letter-spacing: .15px; }
.stat { height: 22px; display: flex; align-items: center; justify-content: space-between; padding: 0 6px 0 12px; color: #3c5878; font-size: 11px; }
.vw { display: flex; align-items: center; gap: 5px; }
.v1 { width: 19px; height: 20px; border: 1px solid #5d9cc8; background: #c9e5f7; padding: 3px 2px; }

.dlg { position: absolute; left: 255px; top: 382px; width: 431px; height: 223px; background: #63caf0; border: 1px solid #557c8d; padding: 0 6px; }
.dt { position: relative; height: 26px; text-align: center; font-size: 13.100px; line-height: 26px; color: #16303a; }
.dt i { position: absolute; right: -1px; top: 0; width: 30px; height: 18px; background: #c55850; border: 1px solid #6f4c4c; border-top: 0; display: flex; align-items: center; justify-content: center; }
.db { height: 189px; background: #f4f4f4; border: 1px solid #b5d9e8; color: #222; }
.dmsg { display: flex; align-items: center; height: 36px; padding: 12px 0 0 9px; }
.dmsg span { margin: -13px 0 0 17px; }
.dinfo { display: flex; height: 105px; padding-left: 59px; }
.dtx { line-height: 15px; }
.dtx span { letter-spacing: .1px; }
.dn { font-weight: 400; font-size: 11px; letter-spacing: .4px; }
.dbtn { display: flex; justify-content: flex-end; padding: 13px 13px 0 0; gap: 12px; }
.dbtn span { width: 76px; height: 25px; border: 1px solid #a0a0a0; background: #dedede; text-align: center; line-height: 23px; }
.dbtn .pri { border-color: #6e9ed0; }
.task { position: absolute; left: 0; top: 633px; width: 890px; height: 6px; background: #60c7ec; border-top: 1px solid #7ba7b5; display: flex; }
.k0 { width: 45px; border-right: 1px solid #3f93b3; }
.ta { width: 52px; background: #79d4f0; border-right: 1px solid #3f93b3; padding: 3px 0 0 12px; }
.ta b { display: block; width: 14px; height: 3px; background: #1c7fe0; }
.tb { width: 56px; border-right: 1px solid #3f93b3; }
.tc { width: 53px; background: #a3dcf7; border-right: 2px solid #3f93b3; }
.td b { width: 28px; background: #1c5a96; margin-top: -1px; height: 4px; }
</style>
